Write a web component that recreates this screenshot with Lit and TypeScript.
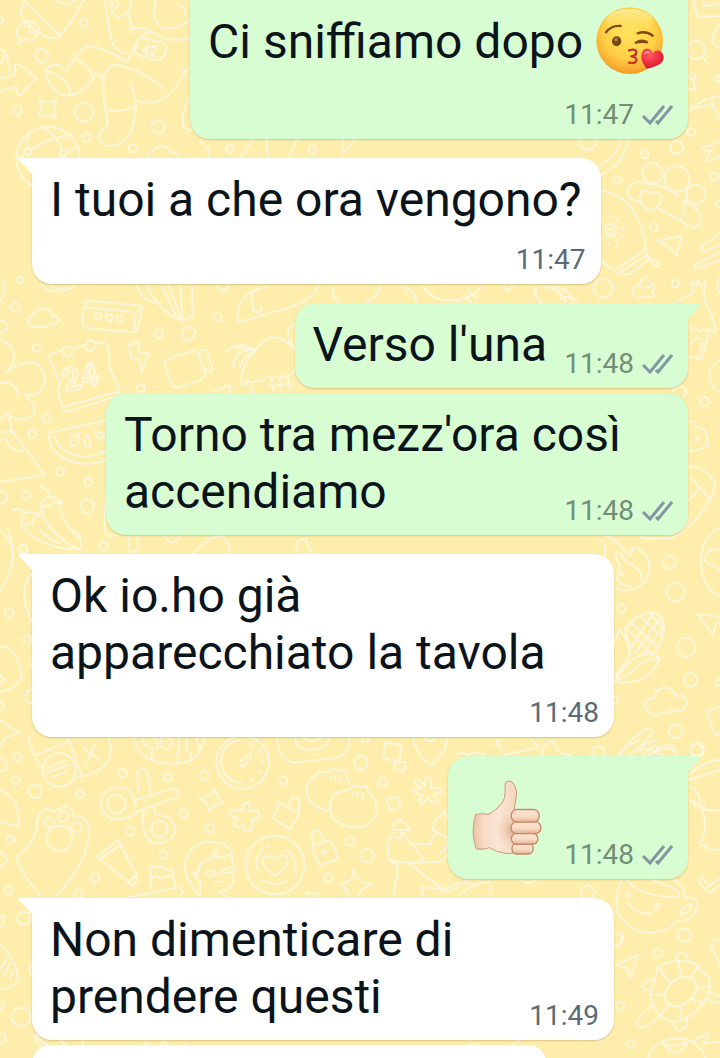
import { LitElement, html, svg, css, nothing } from "lit";
import { customElement, property } from "lit/decorators.js";

/* ---------- wallpaper ---------- */

interface Patch {
  x: number;
  y: number;
  k?: number;
  lines: string;
  dots: [number, number, number][];
}

const patches: Patch[] = [
  {
    x: 0,
    y: 0,
    lines: `M75 0L60 35Q62 55 90 75Q130 115 165 115Q200 100 250 0M75 5L182 108M165 0Q200 25 228 0
      M60 75Q85 55 110 70Q125 90 105 115Q90 125 75 115L55 135L60 115Q40 100 60 75M75 80Q95 75 88 100L105 95
      M0 235L45 225V192Q52 185 110 235L60 285Q50 285 50 260L0 272M30 210L20 165Q15 150 0 150M0 187Q15 180 8 165
      M117 300Q142 312 170 300Q158 325 168 352Q142 340 114 350Q130 325 117 300
      M315 0Q320 50 330 100Q340 160 380 160M335 0Q330 50 355 50Q395 45 395 0M335 15L350 5M345 28L360 12M387 45L397 100
      M400 85Q430 80 455 95Q420 100 400 145Q390 170 380 185Q310 140 260 138Q240 150 200 210Q190 210 180 195Q150 190 137 210Q145 270 195 287Q250 285 278 235L287 220L310 235Q320 195 350 195Q430 210 490 265
      M137 215Q170 215 190 240Q215 265 210 285M230 180Q270 195 278 235
      M310 235Q310 320 325 375Q290 400 300 425Q325 450 370 425Q405 400 408 305Q400 270 390 250M318 330Q370 340 405 318
      M408 303Q500 330 555 215L540 200M555 212L570 208
      M470 0Q445 60 490 85Q530 90 570 60M455 95Q500 130 570 115M535 10Q555 25 558 48
      M570 295Q540 340 550 380Q560 390 575 390
      M425 113L485 128Q502 135 498 152Q490 182 465 180L418 166Q402 160 407 145Q412 112 425 113
      M95 450Q130 420 218 403M84 444Q78 420 88 398M130 385Q165 395 187 450M200 455L232 440M76 462L55 475
      M600 425Q635 440 625 480M760 418L715 480M800 418L805 480M890 418L865 480M1030 418V460L1065 418
      M445 475Q440 455 460 455Q485 420 510 455Q535 455 535 475`,
    dots: [[252,68,12],[125,166,20],[52,333,13],[252,337,28],[260,412,13],[475,380,20],[398,445,12],[0,62,10],[144,475,95],[84,455,10],[190,460,10],[690,447,12],[938,449,12]],
  },
  {
    x: 540,
    y: 0,
    lines: `M460 0L475 50L540 48M490 0L492 18L540 12M540 75Q520 95 515 125L540 145M488 172L505 190
      M447 228L458 238L468 223L460 250L468 270L447 268M450 330Q490 290 540 290M450 330Q500 310 520 318M515 305L535 350
      M120 418Q120 450 145 450Q170 445 170 418M265 418Q250 500 178 525M240 420Q235 470 178 495
      M485 445L540 425M485 445Q500 460 515 450Q495 475 500 485L540 470
      M305 547Q270 540 262 575Q262 600 300 605M310 548Q380 555 415 590M350 622L460 685Q485 680 480 645Q460 610 432 602Q437 640 420 660
      M328 632Q293 608 300 583Q316 560 332 582Q355 568 365 595Q362 620 328 632
      M205 690Q212 680 218 692Q212 708 198 700Q188 682 205 672Q230 668 230 695Q222 716 200 712
      M210 645V655M237 655L230 663M245 685L257 682M240 705L252 712M228 722L233 732M208 728V738M185 715L178 722
      M178 570Q300 590 318 745M178 780L235 820L320 765V745L235 805M240 820Q260 830 280 815L325 778L350 800Q370 795 345 780L320 770
      M352 722L425 708L410 765L385 740ZM540 700L485 740Q480 755 495 755L540 735M540 755L465 795Q460 810 480 802L540 780
      M280 880Q275 860 300 855Q300 840 320 828Q325 845 338 850Q350 870 335 875Q350 885 335 890H300Q280 890 280 880M305 862Q320 868 330 858
      M40 860Q95 865 95 905`,
    dots: [[468,150,27],[533,237,9],[453,397,12],[410,442,20],[315,463,12],[232,541,12],[523,530,12],[538,612,10],[341,682,12],[190,865,28],[406,850,11],[338,520,30],[411,537,38],[467,583,29]],
  },
  {
    x: 590,
    y: 130,
    lines: `M255 517L312 487Q298 460 305 455L317 468L325 450L332 468L347 455Q340 490 342 505Q370 565 378 600Q365 612 355 595Q350 610 340 597Q330 608 320 597Q308 605 298 590
      M355 610L335 688L298 680M303 640Q325 605 338 640L325 680M390 690Q355 710 358 740Q365 780 390 785
      M298 875Q312 865 320 893L345 897L355 948L312 965L298 960M298 1010Q350 1010 375 1060Q375 1110 298 1190M300 1040L362 1110M298 1110L325 1078
      M155 1222L170 1227L232 1225L298 1160M245 785Q270 755 288 780Q290 795 280 800M390 490Q372 470 390 445`,
    dots: [[343,814,14],[320,928,4]],
  },
  {
    x: 0,
    y: 280,
    lines: `M90 135Q75 115 100 105Q110 75 145 92Q160 100 155 108Q180 105 175 125Q165 138 150 132Q130 150 115 138Q100 145 90 135
      M265 62L410 76Q428 78 425 92L412 150Q410 158 395 156L260 145Q245 140 247 125L253 75Q255 60 265 62M258 82L395 95Q408 98 403 150M408 98L425 84
      M190 210L165 218Q145 220 150 240L180 312M215 208L255 195M290 188Q325 185 325 205L330 270Q335 275 355 320Q365 345 345 350L205 395Q190 395 188 380L172 330Q178 315 182 310M190 380L355 335
      M385 195L420 187L415 215L447 220L425 275L417 238L397 235Z
      M495 258Q490 245 505 238L575 213Q590 212 595 225L615 280Q615 295 605 298L535 322Q520 325 515 310ZM598 228L603 212Q618 205 622 218L638 265Q636 278 630 276L612 264
      M410 15Q430 70 475 65M440 15Q480 100 545 122Q575 115 578 100L575 15M485 18L530 110M505 15L545 118M540 15L548 110
      M125 15Q160 55 230 15M150 15Q180 35 205 15M955 15Q940 60 860 85L715 127Q700 40 800 20M775 25Q745 45 760 60Q745 65 758 75Q750 95 780 98Q790 88 780 80
      M680 215Q710 180 765 208Q700 210 700 260M690 202Q720 200 765 212Q722 235 720 262M765 212Q810 145 865 190L888 208M765 212Q720 260 725 310Q738 320 745 300Q755 315 770 300Q790 310 800 290Q820 300 840 285Q860 300 885 270
      M750 315L760 340M815 300L820 335M840 295L845 335M865 295L870 335M810 318L888 310M890 130Q855 140 865 175Q875 195 888 205M640 335L690 315V340
      M0 180Q50 190 40 250L20 280Q60 240 110 250Q150 285 125 330Q105 350 75 345Q120 380 95 410Q60 430 25 405M0 310Q50 300 55 350
      M0 420L25 400L35 450L135 585L0 605M0 455H35M0 480Q15 470 25 490Q35 515 70 512
      M145 460L320 420M145 460Q150 545 260 552Q300 550 320 540M165 470Q180 520 250 530Q290 530 320 510
      M235 460Q205 475 212 495Q240 505 235 460M262 465Q245 490 260 502Q285 500 262 465M285 455Q290 480 312 475Q315 455 285 455
      M120 620Q150 625 145 650Q115 665 125 690Q132 670 145 682Q165 662 187 670Q175 650 145 650M125 690Q135 750 235 810Q250 805 240 780Q180 720 180 672
      M40 690Q65 680 75 700Q55 720 70 745Q80 720 95 732Q100 705 122 705Q100 690 75 700M70 745Q120 800 220 808M215 750Q245 760 240 775
      M322 610Q312 700 315 755Q320 775 350 765M385 768L388 810Q400 825 415 805L412 768M495 768Q515 805 540 768M580 820Q640 760 665 770Q690 790 690 820M890 815Q885 780 915 775L935 820
      M0 750Q40 780 40 840M10 0Q20 40 0 65`,
    dots: [[46,82,14],[110,204,12],[476,162,13],[566,160,20],[652,110,12],[423,324,12],[139,415,12],[97,461,12],[181,575,12],[265,605,12],[78,646,12],[263,678,20],[70,807,12],[310,798,13],[0,140,20],[0,652,20],[295,109,10],[328,113,10],[360,117,10],[203,214,15],[272,197,16],[62,0,10]],
  },
  {
    x: 120,
    y: 275,
    k: 0.383,
    lines: `M555 30Q550 80 605 82Q660 80 680 30M735 30Q775 40 775 82M790 30Q830 80 890 62Q940 50 940 30M880 65L895 80M900 55L925 80M910 40L930 60
      M1000 30L1015 42L1025 30M1085 30Q1080 70 1120 82M1110 30Q1160 40 1165 82M1150 60Q1190 50 1195 82
      M640 352L660 342M700 342L720 356M770 356L785 342L800 356M840 342L850 356M960 342L975 356M1040 356L1060 342M1170 356L1205 342M1290 352L1330 345`,
    dots: [[268,25,15]],
  },
  {
    x: 600,
    y: 520,
    lines: `M125 45V55H215Q240 45 265 5M0 60Q20 70 15 110M18 50Q30 45 45 65Q70 80 80 100Q85 110 95 100Q100 85 95 80Q150 95 148 145Q140 210 70 210L45 205
      M50 95Q45 120 60 135Q55 160 70 165Q50 160 50 175Q65 195 90 200M60 100Q80 130 105 140Q125 150 125 180
      M360 20Q300 60 302 130Q305 200 360 230M360 90Q320 80 315 115Q320 140 345 135Q350 150 360 150
      M75 330Q90 300 130 282Q160 270 180 290Q195 310 190 330Q185 380 155 405M75 330L90 385L88 410M80 325L155 400M95 308L170 380M120 288L188 350M145 278L192 325M92 385L160 278M105 400L185 290M130 402L192 315
      M42 370L58 328Q88 360 90 410M45 485Q90 400 150 402Q170 405 180 415Q145 500 45 485M45 485Q90 465 110 440Q130 420 180 415M45 470L85 412
      M293 283L360 290M293 283L338 343L350 310L360 305
      M150 580Q130 565 138 545Q150 530 165 535Q165 505 195 502Q225 505 225 530Q240 520 258 535Q265 560 245 572Q230 575 220 568Q210 580 185 578Q165 590 150 580
      M360 560L320 573L345 645L360 642M60 705Q90 650 145 625Q165 630 155 645L110 690M110 690Q150 680 165 695Q180 670 220 678Q230 690 225 705M150 705Q155 690 185 705`,
    dots: [[208,127,20],[227,216,28],[64,265,13],[259,382,28],[272,480,20],[45,541,10],[227,634,20],[292,690,20],[358,488,10]],
  },
  {
    x: 0,
    y: 730,
    lines: `M85 20Q95 70 125 115M110 75L205 35M205 25L245 135M325 20Q345 80 310 110Q290 130 225 145M250 55L298 88M285 45L260 95M140 115L195 92M142 128L205 105M155 143L200 125
      M400 22Q410 90 500 100Q600 110 613 22M425 22Q430 50 460 55Q450 80 460 90M460 22Q480 35 470 55M535 22Q545 50 530 70Q540 90 530 100M560 25Q555 60 575 75L568 95M590 25L600 55
      M722 30Q670 35 662 95Q670 155 725 158M722 108Q715 95 735 82L755 68Q752 88 738 102Q728 112 722 108
      M830 22Q840 100 890 98L1000 85Q1045 80 1050 22M885 22Q890 60 935 60Q985 55 990 22M910 22Q935 45 965 22
      M1155 38L1205 45L1197 95L1150 85ZM1187 92L1217 98L1212 125L1183 118ZM1240 22Q1245 70 1292 105Q1335 75 1343 22M1275 22Q1290 45 1308 22
      M1365 110L1380 85M0 180Q60 200 57 290L0 275
      M50 380Q115 330 112 270Q120 235 145 238L165 245Q190 220 215 240L220 258Q265 255 268 300Q265 400 165 500M50 380Q60 430 125 500
      M415 185L412 130Q425 105 442 125L452 192M405 210L520 175Q545 180 535 200L410 245Q385 268 350 268Q302 262 302 215Q315 172 355 172Q385 175 397 195Q402 215 410 230
      M430 240V290Q435 340 480 340Q530 330 525 290Q515 255 468 255L462 232M440 215H441
      M598 205Q635 200 645 175Q650 205 670 218Q635 225 627 245Q625 215 598 205
      M730 225Q745 210 750 230L748 245Q775 235 778 260Q775 270 755 268Q765 300 745 303Q730 305 728 285Q705 300 703 280Q705 270 715 265Q685 260 690 245Q700 232 725 245Z
      M838 218L900 250L870 298L820 265ZM868 225Q870 200 890 205Q905 215 895 245
      M990 242Q920 230 920 180Q930 125 985 125L1000 115L1015 122L1035 122L1050 165M990 242Q985 180 1050 180L1060 165L1080 170L1100 168L1105 185Q1135 210 1130 250Q1115 295 1060 292Q1000 285 990 242M990 140L995 150M1003 138L1008 150M1018 140L1025 155M1060 185V198M1073 187V200M1088 188V202
      M1275 150Q1290 135 1295 155L1292 175Q1320 170 1322 182Q1320 192 1300 192Q1320 215 1305 218Q1290 218 1282 202Q1270 228 1260 220Q1255 205 1268 195Q1240 192 1240 180Q1250 170 1270 178Q1240 160 1245 152Q1258 145 1275 168Z
      M1160 208L1195 200L1202 230L1170 242Z
      M290 380L355 330L410 435L385 455ZM298 388L365 343M390 450L405 438L412 450L397 468L385 458M390 500L540 472Q555 485 540 500
      M455 475L450 410Q475 415 490 408Q490 422 515 418L525 470M455 450Q465 430 480 445Q505 435 520 440
      M600 500Q550 440 555 400Q570 335 635 335Q690 340 697 375L645 385L648 360Q635 375 630 390Q600 385 595 430L575 428L588 437Q585 450 600 450V490M600 400L590 440M615 430Q630 415 650 432Q630 445 615 430M660 425Q690 405 708 415Q690 435 660 425M697 375V400M645 455L668 455M700 430V460Q695 480 660 485H655L680 500
      M825 437Q785 410 787 390Q800 365 825 388Q850 362 865 392Q860 415 825 437M770 415Q760 385 790 358M860 360Q895 385 885 430M785 450Q820 470 860 455M800 350L805 347
      M940 345L990 330Q1015 370 1010 390L960 405Q935 370 940 345M940 342L935 315Q945 295 958 305L972 332
      M1020 462Q1060 460 1060 420Q1075 460 1118 462Q1080 475 1075 500M1020 462Q1045 475 1045 500M920 500V490H955V500
      M1345 240Q1300 265 1298 300L1345 325M1180 285Q1200 260 1220 285L1228 300H1185ZM1180 320L1200 325L1205 305L1270 385Q1265 400 1225 398L1165 390V345Q1165 320 1180 310M1240 342H1290L1305 310M1165 390L1195 405L1180 500M1225 400L1340 485L1380 470M1225 400L1320 395Q1340 385 1345 370M1270 500L1262 472L1330 478`,
    dots: [[52,82,12],[47,152,12],[105,184,20],[240,192,12],[0,104,20],[33,329,12],[0,388,20],[26,480,12],[178,120,50],[367,129,13],[503,142,12],[613,137,13],[850,152,12],[1083,97,20],[1148,157,12],[551,250,13],[390,304,13],[630,294,13],[1051,334,13],[490,375,12],[1101,377,20],[985,443,12],[285,444,13],[235,492,12],[179,325,38],[147,277,15],[190,258,16],[230,292,15],[350,222,28],[478,297,24],[728,97,79],[755,43,3],[778,65,3],[787,97,3],[778,127,3],[757,149,3],[498,38,18],[825,405,88],[973,365,5],[1095,27,10]],
  },
  {
    x: 440,
    y: 740,
    lines: `M0 45Q20 30 18 0M50 45Q60 35 85 45Q110 30 135 45M165 20L180 0M170 0L195 45L300 20L275 0M305 45Q310 10 340 0Q345 40 390 45
      M535 45Q560 10 600 0M570 45Q600 15 650 0M610 45L640 20Q655 15 650 35Q680 15 705 35M0 145L5 160M0 205Q20 225 25 240M0 340Q25 330 25 290
      M745 105Q800 60 840 60M745 120L840 90M750 140Q780 150 780 195Q810 260 780 310Q810 330 840 330M750 180Q800 220 840 210M760 180L765 200M790 190L795 210
      M0 460Q40 425 75 430M60 465Q90 430 150 425Q160 440 150 470M75 420Q110 445 120 425M245 420Q265 435 290 420
      M545 420Q520 480 535 520Q570 580 640 578Q690 570 710 545Q760 545 775 495Q770 470 735 475Q735 430 700 420M560 420Q600 470 715 472Q725 460 700 445L640 420M565 490Q585 525 635 520M720 525Q725 500 755 492Q750 520 720 525
      M840 415L805 440L790 415Q775 410 778 425L805 460L840 435M530 675L592 645L572 715L560 685ZM840 600Q810 600 815 620L840 680
      M545 580Q555 600 530 615
      M630 760L655 680Q715 650 760 668L805 710Q820 750 790 790Q750 840 700 845Q640 830 630 760M675 770Q685 720 725 710Q775 710 768 755Q745 795 705 800Q675 795 675 770M655 680L690 730M715 665L725 710M775 680L750 715M808 735L768 750M790 790L755 775M725 843L720 797M665 820L690 790M630 765L675 765M708 660Q710 635 730 638Q750 645 740 665M635 745Q605 755 608 735Q620 715 645 722M640 795Q590 830 590 855Q610 880 665 820M700 845Q705 875 725 870Q745 860 740 835M800 755L840 770M800 775L825 790L840 785
      M625 954Q640 900 710 895Q740 895 755 905L805 880L790 910L840 905M670 910Q690 925 740 908Q735 930 705 938Q680 930 670 910M755 905Q790 925 795 954
      M70 930Q90 895 140 930M160 930Q200 935 240 900M480 900L490 910`,
    dots: [[475,38,20],[770,30,18],[443,457,20],[733,585,20],[653,639,13],[541,798,12],[572,912,12],[530,598,18],[565,462,7],[650,500,8]],
  },
  {
    x: 0,
    y: 530,
    lines: `M25 0Q60 100 0 185M95 130Q50 180 95 275M0 352Q45 340 65 430Q60 475 0 485M0 435L18 450L0 460M0 570L60 610L20 620L0 648M120 0Q150 35 180 38M95 395V410`,
    dots: [[70,57,12],[27,248,13],[82,329,12],[96,500,20],[0,527,12]],
  },
  {
    x: 0,
    y: 880,
    lines: `M0 195Q40 220 55 295Q50 325 0 327M0 270L20 235M10 290L30 250M30 300L38 275M0 140Q15 130 12 110L0 112
      M105 470Q115 510 160 515Q240 520 250 485M110 465Q130 500 180 505M180 480L215 510M415 510L440 485L470 510L490 485L540 515L560 490M97 250Q80 270 97 285`,
    dots: [[72,115,20],[0,375,12],[63,410,28],[0,475,16]],
  },
];

@customElement("chat-wallpaper")
export class ChatWallpaper extends LitElement {
  static styles = css`
    :host {
      display: block;
      background: #ffedab;
      overflow: hidden;
    }
    svg {
      display: block;
      width: 100%;
      height: 100%;
    }
    .ink {
      fill: none;
      stroke: #fff7db;
      stroke-width: 6;
      stroke-linecap: round;
      stroke-linejoin: round;
    }
    .figure {
      font-family: Roboto, sans-serif;
      font-weight: 700;
    }
  `;

  render() {
    return html`<svg viewBox="0 0 720 1058" preserveAspectRatio="xMinYMin slice" aria-hidden="true">
      ${patches.map(
        (p) => svg`<g class="ink" transform="translate(${p.x} ${p.y}) scale(${p.k ?? 1 / 3})">
          <path d=${p.lines}></path>
          ${p.dots.map(([x, y, r]) => svg`<circle cx=${x} cy=${y} r=${r}></circle>`)}
        </g>`,
      )}
      <g class="ink figure" transform="scale(.3333)">
        <text x="424" y="160" font-size="42" font-weight="400" transform="rotate(12 424 160)" stroke-width="3">42</text>
        <text x="196" y="1176" font-size="96" transform="rotate(-13 196 1176)">24</text>
      </g>
    </svg>`;
  }
}

/* ---------- emoji ---------- */

const kissFace = html`<svg class="kiss" viewBox="0 0 204 204" role="img" aria-label="😘">
  <defs>
    <radialGradient id="face" cx=".5" cy=".38" r=".64">
      <stop offset="0" stop-color="#ffe45c" />
      <stop offset=".6" stop-color="#ffd045" />
      <stop offset=".88" stop-color="#f9aa2f" />
      <stop offset="1" stop-color="#ec9222" />
    </radialGradient>
    <linearGradient id="gloss" x1="0" y1="0" x2="0" y2="1">
      <stop offset="0" stop-color="#fff3b0" stop-opacity=".8" />
      <stop offset="1" stop-color="#ffe45c" stop-opacity="0" />
    </linearGradient>
    <radialGradient id="heart" cx=".4" cy=".3" r=".75">
      <stop offset="0" stop-color="#ff5a62" />
      <stop offset=".6" stop-color="#ee2b40" />
      <stop offset="1" stop-color="#c4152d" />
    </radialGradient>
  </defs>
  <circle cx="101" cy="101" r="100" fill="url(#face)" />
  <ellipse cx="101" cy="44" rx="72" ry="38" fill="url(#gloss)" />
  <ellipse cx="62" cy="103" rx="14" ry="15" fill="#7a4a12" />
  <ellipse cx="60" cy="98" rx="5" ry="5" fill="#b48a4a" />
  <g fill="none" stroke="#7f4c10" stroke-linecap="round">
    <path d="M30 76Q47 54 74 57" stroke-width="7" />
    <path d="M125 79Q150 70 170 86" stroke-width="7" />
    <path d="M119 107Q137 96 155 106Q137 103 119 107" stroke-width="7" />
  </g>
  <path d="M99 130Q121 124 121 137Q120 147 106 148Q124 151 121 162Q116 171 99 167" fill="none" stroke="#c1352a" stroke-width="7" stroke-linecap="round" stroke-linejoin="round" />
  <path d="M152 185Q131 158 137 140C144 118 166 124 170 139C180 124 201 131 203 149C204 169 182 179 152 185Z" fill="url(#heart)" />
  <path d="M146 140Q152 131 160 137" fill="none" stroke="#ff9a9d" stroke-width="5" stroke-linecap="round" />
</svg>`;

const thumb = html`<svg class="thumb" viewBox="0 0 208 224" role="img" aria-label="👍🏻">
  <defs>
    <linearGradient id="skin" x1="0" y1="0" x2="1" y2="0">
      <stop offset="0" stop-color="#edc3a6" />
      <stop offset=".25" stop-color="#f8dcc7" />
      <stop offset=".55" stop-color="#fae6d5" />
      <stop offset="1" stop-color="#f3d3bb" />
    </linearGradient>
    <radialGradient id="palm" cx=".7" cy=".5" r=".6">
      <stop offset="0" stop-color="#dfb194" stop-opacity=".85" />
      <stop offset="1" stop-color="#f3d3bb" stop-opacity="0" />
    </radialGradient>
    <linearGradient id="finger" x1="0" y1="0" x2="0" y2="1">
      <stop offset="0" stop-color="#fae3d1" />
      <stop offset=".55" stop-color="#f8dcc6" />
      <stop offset="1" stop-color="#e3b093" />
    </linearGradient>
  </defs>
  <path d="M10 103Q30 99 48 103Q84 84 96 55Q100 36 98 12Q105-2 119 6Q133 22 133 40L126 84Q127 92 138 98V212Q120 224 92 217Q68 214 52 202Q30 209 12 205Q-5 160 10 103Z" fill="url(#skin)" stroke="#d09a7a" stroke-width="3" stroke-linejoin="round" />
  <ellipse cx="100" cy="150" rx="38" ry="50" fill="url(#palm)" />
  <g fill="url(#finger)" stroke="#c68a6a" stroke-width="4">
    <rect x="119" y="190" width="63" height="31" rx="14" />
    <rect x="117" y="159" width="79" height="33" rx="15" />
    <rect x="116" y="125" width="89" height="35" rx="16" />
    <rect x="117" y="88" width="83" height="38" rx="17" />
  </g>
</svg>`;

/* ---------- message ---------- */

@customElement("chat-message")
export class ChatMessage extends LitElement {
  @property() time = "";
  @property({ type: Boolean, reflect: true }) out = false;
  @property({ type: Boolean, reflect: true }) tail = false;
  @property({ type: Boolean, reflect: true }) below = false;

  static styles = css`
    :host {
      display: block;
      position: relative;
      box-sizing: border-box;
      max-width: calc(100% - 74px);
      border-radius: 20px;
      background: #ffffff;
      color: #0b141a;
      box-shadow: 0 1px 2px rgba(90, 70, 0, 0.24);
      align-self: flex-start;
    }
    :host([out]) {
      background: #d8fdd2;
      align-self: flex-end;
    }
    :host([tail]) {
      border-top-left-radius: 0;
    }
    :host([tail][out]) {
      border-radius: 20px 0 20px 20px;
    }
    .body {
      display: grid;
    }
    .text {
      grid-area: 1 / 1;
      margin: 0;
      padding: 13px 19px 15px 18px;
      font-size: 48px;
      line-height: 57px;
    }
    .room {
      display: inline-block;
      width: 122px;
    }
    .meta {
      grid-area: 1 / 1;
      align-self: end;
      justify-self: end;
      display: flex;
      align-items: center;
      gap: 8px;
      padding: 0 15px 7px;
      font-size: 28px;
      line-height: 34px;
      color: #5b6b75;
    }
    :host([below]) .meta {
      grid-area: 2 / 1;
    }
    :host([out]) .meta {
      color: #728e76;
    }
    .ticks {
      width: 31px;
      height: 20px;
      fill: none;
      stroke: #8197a2;
      stroke-width: 3;
    }
    .tail {
      position: absolute;
      top: 0;
      left: -14px;
      width: 15px;
      height: 16px;
      fill: #ffffff;
    }
    :host([out]) .tail {
      left: auto;
      right: -14px;
      fill: #d8fdd2;
      transform: scaleX(-1);
    }
  `;

  render() {
    return html`
      ${this.tail
        ? html`<svg class="tail" viewBox="0 0 15 16" aria-hidden="true"><path d="M15 0H2Q0 0 1 2L14 16H15Z" /></svg>`
        : nothing}
      <div class="body">
        <p class="text"><slot></slot>${this.below ? nothing : html`<span class="room"></span>`}</p>
        <div class="meta">
          <time>${this.time}</time>
          ${this.out
            ? html`<svg class="ticks" viewBox="0 0 31 20" role="img" aria-label="Consegnato">
                <path d="M1 11L8 18L22 1M14 16L16 18L30 1" />
              </svg>`
            : nothing}
        </div>
      </div>
    `;
  }
}

/* ---------- page ---------- */

@customElement("app-root")
export class AppRoot extends LitElement {
  static styles = css`
    :host {
      display: grid;
      height: 100vh;
      overflow: hidden;
      font-family: Roboto, sans-serif;
    }
    chat-wallpaper {
      grid-area: 1 / 1;
      min-height: 0;
    }
    .thread {
      grid-area: 1 / 1;
      z-index: 1;
      min-height: 0;
      display: flex;
      flex-direction: column;
      gap: 19px;
      padding: 0 32px;
    }
    .group {
      display: flex;
      flex-direction: column;
      gap: 5px;
    }
    .cut {
      border-top-left-radius: 0;
      border-top-right-radius: 0;
    }
    .kiss {
      width: 68px;
      height: 68px;
      margin: -12px 5px 0 1px;
      vertical-align: -17px;
    }
    .line {
      display: block;
      height: 70px;
    }
    .big {
      display: inline-block;
      height: 95px;
      vertical-align: top;
    }
    .thumb {
      width: 70px;
      height: 75px;
      margin: 11px 5px 0 6px;
    }
    .next {
      width: 514px;
    }
  `;

  render() {
    return html`
      <chat-wallpaper></chat-wallpaper>
      <main class="thread">
        <chat-message class="cut" out below time="11:47"><span class="line">Ci sniffiamo dopo ${kissFace}</span></chat-message>
        <chat-message tail below time="11:47">I tuoi a che ora vengono?</chat-message>
        <div class="group">
          <chat-message out tail time="11:48">Verso l'una</chat-message>
          <chat-message out time="11:48">Torno tra mezz'ora così accendiamo</chat-message>
        </div>
        <chat-message tail below time="11:48">Ok io.ho già apparecchiato la tavola</chat-message>
        <chat-message out tail time="11:48"><span class="big">${thumb}</span></chat-message>
        <div class="group">
          <chat-message tail time="11:49">Non dimenticare di prendere questi</chat-message>
          <chat-message class="next" below></chat-message>
        </div>
      </main>
    `;
  }
}
